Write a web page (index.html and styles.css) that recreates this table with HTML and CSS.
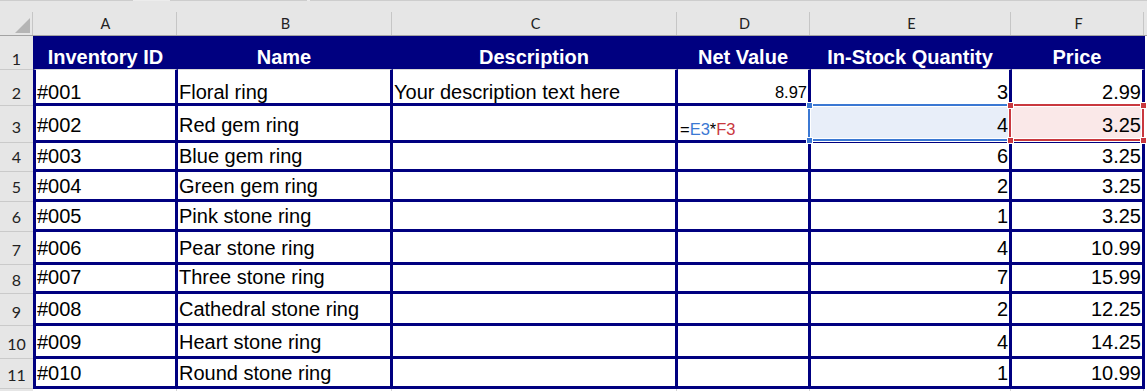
FILE: index.html
```html
<!DOCTYPE html>
<html>
<head>
<meta charset="utf-8">
<title>Inventory</title>
<link rel="stylesheet" href="styles.css">
</head>
<body>
<div class="sheet">
  <div class="row">
    <div class="ch corner"><span class="tri"></span></div>
    <div class="ch">A</div>
    <div class="ch">B</div>
    <div class="ch">C</div>
    <div class="ch">D</div>
    <div class="ch">E</div>
    <div class="ch">F</div>
  </div>
  <div class="row r1">
    <div class="rh">1</div>
    <div class="c hd first">Inventory ID</div>
    <div class="c hd">Name</div>
    <div class="c hd">Description</div>
    <div class="c hd">Net Value</div>
    <div class="c hd">In-Stock Quantity</div>
    <div class="c hd">Price</div>
  </div>
  <div class="row r2">
    <div class="rh">2</div>
    <div class="c first">#001</div>
    <div class="c">Floral ring</div>
    <div class="c">Your description text here</div>
    <div class="c num small">8.97</div>
    <div class="c num">3</div>
    <div class="c num">2.99</div>
  </div>
  <div class="row r3">
    <div class="rh">3</div>
    <div class="c first">#002</div>
    <div class="c">Red gem ring</div>
    <div class="c"></div>
    <div class="c small fx">=<span class="fx-e">E3</span>*<span class="fx-f">F3</span></div>
    <div class="c num selb">4</div>
    <div class="c num selr">3.25</div>
  </div>
  <div class="row r4">
    <div class="rh">4</div>
    <div class="c first">#003</div>
    <div class="c">Blue gem ring</div>
    <div class="c"></div>
    <div class="c"></div>
    <div class="c num">6</div>
    <div class="c num">3.25</div>
  </div>
  <div class="row r5">
    <div class="rh">5</div>
    <div class="c first">#004</div>
    <div class="c">Green gem ring</div>
    <div class="c"></div>
    <div class="c"></div>
    <div class="c num">2</div>
    <div class="c num">3.25</div>
  </div>
  <div class="row r6">
    <div class="rh">6</div>
    <div class="c first">#005</div>
    <div class="c">Pink stone ring</div>
    <div class="c"></div>
    <div class="c"></div>
    <div class="c num">1</div>
    <div class="c num">3.25</div>
  </div>
  <div class="row r7">
    <div class="rh">7</div>
    <div class="c first">#006</div>
    <div class="c">Pear stone ring</div>
    <div class="c"></div>
    <div class="c"></div>
    <div class="c num">4</div>
    <div class="c num">10.99</div>
  </div>
  <div class="row r8">
    <div class="rh">8</div>
    <div class="c first">#007</div>
    <div class="c">Three stone ring</div>
    <div class="c"></div>
    <div class="c"></div>
    <div class="c num">7</div>
    <div class="c num">15.99</div>
  </div>
  <div class="row r9">
    <div class="rh">9</div>
    <div class="c first">#008</div>
    <div class="c">Cathedral stone ring</div>
    <div class="c"></div>
    <div class="c"></div>
    <div class="c num">2</div>
    <div class="c num">12.25</div>
  </div>
  <div class="row r10">
    <div class="rh">10</div>
    <div class="c first">#009</div>
    <div class="c">Heart stone ring</div>
    <div class="c"></div>
    <div class="c"></div>
    <div class="c num">4</div>
    <div class="c num">14.25</div>
  </div>
  <div class="row r11">
    <div class="rh">11</div>
    <div class="c first">#010</div>
    <div class="c">Round stone ring</div>
    <div class="c"></div>
    <div class="c"></div>
    <div class="c num">1</div>
    <div class="c num">10.99</div>
  </div>
  <div class="row r12">
    <div class="rh"></div>
    <div class="e"></div>
    <div class="e"></div>
    <div class="e"></div>
    <div class="e"></div>
    <div class="e"></div>
    <div class="e"></div>
  </div>

  <div class="topline"></div>
  <div class="refbox blue"></div>
  <div class="refbox red"></div>
  <div class="handle hb h-bl-t"></div>
  <div class="handle hb h-bl-b"></div>
  <div class="handle hr h-rl-t"></div>
  <div class="handle hr h-rl-b"></div>
  <div class="handle hr h-rr-t"></div>
  <div class="handle hr h-rr-b"></div>
</div>
</body>
</html>
```

FILE: styles.css
```css
html, body {
  margin: 0;
  padding: 0;
  overflow: hidden;
  background: #fff;
}

.sheet {
  position: relative;
  display: grid;
  grid-template-columns: 33px 145px 215px 285px 133px 201px 133px;
  grid-template-rows: 36px 34px 36px 37px 29px 30px 30px 33px 29px 32px 33px 30px 24px;
  width: 1147px;
  height: 391px;
  overflow: hidden;
  background: linear-gradient(#e6e6e6 0 35px, #a3a3a3 35px 36px, #fff 36px);
}

.row { display: contents; }

/* column header */
.ch {
  position: relative;
  display: flex;
  justify-content: center;
  align-items: center;
  padding-top: 13px;
  background: #e6e6e6;
  border-bottom: 1px solid #a3a3a3;
  font: 14.5px/16px Lato, "Liberation Sans", sans-serif;
  color: #222;
}
.ch::after {
  content: "";
  position: absolute;
  right: 1px;
  top: 12px;
  bottom: 0;
  width: 1px;
  background: #c6c6c6;
}
.ch.corner {
  justify-content: flex-end;
  align-items: flex-end;
  padding: 0 3px 2px 0;
}
.ch.corner::after { right: 0; }
.tri {
  width: 15px;
  height: 15px;
  background: #b5b5b5;
  clip-path: polygon(100% 0, 100% 100%, 0 100%);
}

.topline {
  position: absolute;
  left: 0;
  top: 0;
  width: 1147px;
  height: 1px;
  background: linear-gradient(to right, #cdcdcd 0 133px, #ececec 133px 170px, #cdcdcd 170px 307px, #ececec 307px 310px, #cdcdcd 310px);
}

/* row header */
.rh {
  display: flex;
  justify-content: center;
  align-items: flex-end;
  background: #e6e6e6;
  border-bottom: 1px solid #cacaca;
  font: 16px/20px Lato, "Liberation Sans", sans-serif;
  color: #222;
}

/* cells */
.c {
  display: flex;
  align-items: flex-end;
  min-width: 0;
  background: #fff;
  border-right: 3px solid #000080;
  border-bottom: 3px solid #000080;
  padding: 0 1px;
  font: 20px/20px "Liberation Sans", Arial, sans-serif;
  color: #000;
  white-space: nowrap;
}
.c.first { border-left: 3px solid #000080; }
.c.hd {
  background: #000080;
  color: #fff;
  font-weight: bold;
  justify-content: center;
  border-bottom: 1px solid #d8d8d8;
  padding-bottom: 2.5px;
}
.c.num { justify-content: flex-end; }
.c.small { font-size: 16.5px; }
.c.selb { background: #e8eef9; }
.c.selr { background: #fae8e8; }

.fx-e { color: #3b78d3; }
.fx-f { color: #c9383e; }

.e {
  background: linear-gradient(to left, transparent 1px, #d4d4d4 1px 2px, transparent 2px);
}

/* per-row vertical placement */
.r1 .rh { padding-bottom: 0; }
.r2 .rh { padding-bottom: 2px; }
.r3 .rh { padding-bottom: 5px; }
.r4 .rh { padding-bottom: 4px; }
.r5 .rh { padding-bottom: 4.5px; }
.r6 .rh { padding-bottom: 4px; }
.r7 .rh { padding-bottom: 4px; }
.r8 .rh { padding-bottom: 3.5px; }
.r9 .rh { padding-bottom: 3.5px; }
.r10 .rh { padding-bottom: 4px; }
.r11 .rh { padding-bottom: 3.5px; }

.r2 .c { padding-bottom: 1px; }
.r3 .c { padding-bottom: 5px; }
.r3 .c.fx { padding-bottom: 1px; padding-left: 2px; }
.r4 .c { padding-bottom: 3px; }
.r5 .c { padding-bottom: 3.5px; }
.r6 .c { padding-bottom: 3.5px; }
.r7 .c { padding-bottom: 4px; }
.r8 .c { padding-bottom: 4px; }
.r9 .c { padding-bottom: 4px; }
.r10 .c { padding-bottom: 4px; }
.r11 .c { padding-bottom: 3px; }

/* formula reference highlights */
.refbox {
  position: absolute;
  box-sizing: border-box;
  border: 2px solid;
  box-shadow: 0 0 0 1px #fff, inset 0 0 0 1px #fff;
}
.refbox.blue {
  left: 808px;
  top: 104px;
  width: 203px;
  height: 37px;
  border-color: #3b78d3;
}
.refbox.red {
  left: 1009px;
  top: 104px;
  width: 135px;
  height: 37px;
  border-color: #c9383e;
}
.handle {
  position: absolute;
  width: 5px;
  height: 5px;
  box-shadow: 0 0 0 1px #fff;
}
.hb { background: #3b78d3; }
.hr { background: #c9383e; }
.h-bl-t { left: 807px; top: 103px; }
.h-bl-b { left: 807px; top: 138px; }
.h-rl-t { left: 1008px; top: 103px; }
.h-rl-b { left: 1008px; top: 138px; }
.h-rr-t { left: 1141px; top: 103px; }
.h-rr-b { left: 1141px; top: 138px; }
```
